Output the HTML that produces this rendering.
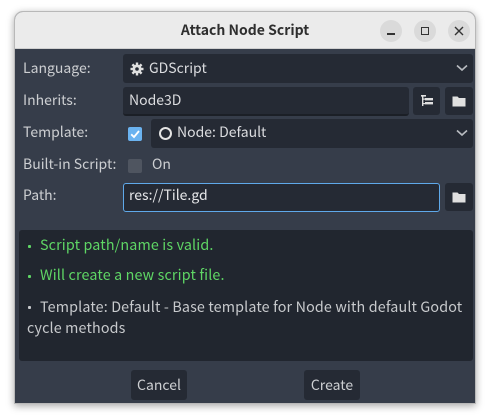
<!DOCTYPE html>
<html><head><meta charset="utf-8"><style>
*{box-sizing:border-box;margin:0;padding:0}
body{width:490px;height:420px;background:#fff;position:relative;overflow:hidden;font-family:"Noto Sans CJK SC","DejaVu Sans",sans-serif;font-size:14px;color:#cdcfd2}
.win{position:absolute;left:14px;top:11px;width:462px;height:393px;border-radius:9px 9px 0 0;background:#363d4a;box-shadow:0 2px 8px rgba(0,0,0,.35);overflow:hidden;border:1px solid #b8b8b8}
.tb{position:absolute;left:0;top:0;width:100%;height:37px;background:#ebebeb;border-bottom:1px solid #d0d0d0;color:#2e2e2e;font-weight:bold;font-size:14px;text-align:center;line-height:37px}
.wb{position:absolute;top:8px;width:22px;height:22px;border-radius:50%;background:#dadada}
.a{position:absolute}
.lbl{position:absolute;left:8px;color:#cdcfd2;line-height:20px}
.fld{position:absolute;background:#252a34;border-radius:3px}
.btn{position:absolute;background:#252a34;border-radius:3px;text-align:center;line-height:30px}
.t{position:absolute;line-height:20px}
.i{font-size:14.3px;letter-spacing:0.15px;text-indent:13px}
.d{position:absolute;width:3px;height:3px;border-radius:1px}
</style></head><body>
<div class="win">
 <div class="tb">Attach Node Script
  <div class="wb" style="left:365px"><div class="a" style="left:7px;top:13px;width:8px;height:1.5px;background:#333"></div></div>
  <div class="wb" style="left:399px"><div class="a" style="left:7px;top:7px;width:8px;height:8px;border:1.3px solid #333"></div></div>
  <div class="wb" style="left:433px"><svg class="a" style="left:6px;top:6px" width="10" height="10"><path d="M1 1L9 9M9 1L1 9" stroke="#333" stroke-width="1.4"/></svg></div>
 </div>
 <div class="lbl" style="top:46px">Language:</div>
 <div class="fld" style="left:108px;top:42px;width:350px;height:29px"></div>
 <svg class="a" style="left:115px;top:50px" width="14" height="14" viewBox="0 0 14 14"><g fill="#e0e0e0"><circle cx="7" cy="7" r="4.5"/><rect x="5.8" y="0.5" width="2.4" height="13"/><rect x="0.5" y="5.8" width="13" height="2.4"/><rect x="5.8" y="0.5" width="2.4" height="13" transform="rotate(45 7 7)"/><rect x="5.8" y="0.5" width="2.4" height="13" transform="rotate(-45 7 7)"/></g><circle cx="7" cy="7" r="1.8" fill="#252a34"/></svg>
 <div class="t" style="left:134px;top:46px;color:#dcdde0">GDScript</div>
 <svg class="a" style="left:441px;top:52px" width="12" height="8"><path d="M1 1.5L6 6L11 1.5" stroke="#b8bbc0" stroke-width="1.6" fill="none"/></svg>

 <div class="lbl" style="top:78px">Inherits:</div>
 <div class="fld" style="left:108px;top:75px;width:286px;height:29px;border-bottom:2px solid #1b1f26"></div>
 <div class="t" style="left:114px;top:78px;color:#dcdde0">Node3D</div>
 <div class="btn" style="left:398px;top:75px;width:27px;height:28px"></div>
 <svg class="a" style="left:405px;top:82px" width="14" height="14"><g fill="#e0e0e0"><rect x="1" y="1" width="5" height="1.6"/><rect x="2" y="1" width="1.4" height="11"/><rect x="5" y="4" width="8" height="2.4"/><rect x="5" y="8" width="8" height="2.4"/><rect x="2" y="4.5" width="3" height="1.2"/><rect x="2" y="9" width="3" height="1.2"/></g></svg>
 <div class="btn" style="left:430px;top:75px;width:28px;height:28px"></div>
 <svg class="a" style="left:437px;top:83px" width="14" height="12"><path d="M0.5 1.5h5l1.5 1.5h6.5v8.5h-13z" fill="#e0e0e0"/></svg>

 <div class="lbl" style="top:110px">Template:</div>
 <div class="a" style="left:113px;top:115px;width:14px;height:14px;border-radius:2px;background:#6bb3f0"></div>
 <svg class="a" style="left:113px;top:115px" width="14" height="14"><path d="M3.2 7.3L6 10L11 4" stroke="#fff" stroke-width="1.8" fill="none"/></svg>
 <div class="fld" style="left:136px;top:107px;width:322px;height:29px"></div>
 <div class="a" style="left:144px;top:115px;width:13px;height:13px;border-radius:50%;border:2px solid #e4e4e4"></div>
 <div class="t" style="left:162px;top:110px;color:#dcdde0">Node: Default</div>
 <svg class="a" style="left:441px;top:117px" width="12" height="8"><path d="M1 1.5L6 6L11 1.5" stroke="#b8bbc0" stroke-width="1.6" fill="none"/></svg>

 <div class="lbl" style="top:142px">Built-in Script:</div>
 <div class="a" style="left:113px;top:147px;width:14px;height:14px;border-radius:2px;background:#4f5560"></div>
 <div class="t" style="left:137px;top:142px;color:#cdcfd2">On</div>

 <div class="lbl" style="top:173px">Path:</div>
 <div class="fld" style="left:108px;top:171px;width:317px;height:29px;border:1.5px solid #5fa9ea"></div>
 <div class="t" style="left:114px;top:173px;color:#e6e7e9">res://Tile.gd</div>
 <div class="btn" style="left:430px;top:171px;width:28px;height:28px"></div>
 <svg class="a" style="left:437px;top:179px" width="14" height="12"><path d="M0.5 1.5h5l1.5 1.5h6.5v8.5h-13z" fill="#e0e0e0"/></svg>

 <div class="a" style="left:4px;top:218px;width:454px;height:131px;background:#21262f;border-radius:3px"></div>
 <div class="d" style="left:13px;top:233px;background:#5fd765"></div>
 <div class="t i" style="left:12px;top:223px;color:#5fd765">Script path/name is valid.</div>
 <div class="d" style="left:13px;top:263px;background:#5fd765"></div>
 <div class="t i" style="left:12px;top:253px;color:#5fd765">Will create a new script file.</div>
 <div class="d" style="left:13px;top:294px;background:#c8cacd"></div>
 <div class="t i" style="left:12px;top:284px;color:#c8cacd;width:440px;line-height:21px">Template: Default - Base template for Node with default Godot cycle methods</div>

 <div class="btn" style="left:116px;top:358px;width:56px;height:30px">Cancel</div>
 <div class="btn" style="left:289px;top:358px;width:56px;height:30px">Create</div>
</div>
</body></html>
